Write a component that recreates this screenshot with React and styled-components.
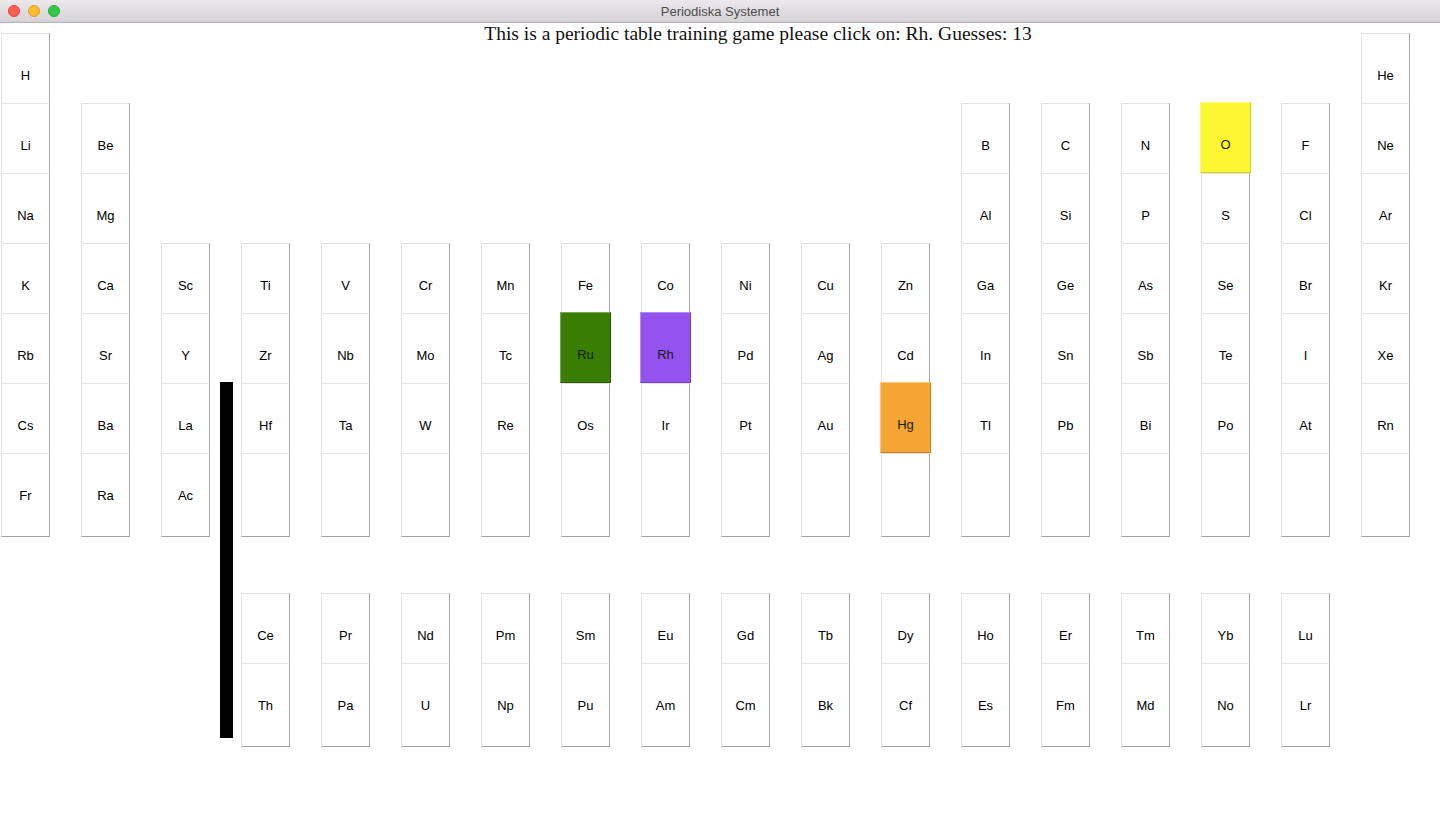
import React from 'react'
import styled, { createGlobalStyle, css } from 'styled-components';

const GlobalStyle = createGlobalStyle`
  body {
    margin: 0;
    background: #ffffff;
    font-family: "Liberation Sans", Arial, sans-serif;
  }
`;

const Page = styled.div`
  min-height: 829px;
`;

const TitleBar = styled.div`
  height: 22px;
  position: relative;
  display: flex;
  align-items: center;
  justify-content: center;
  background: linear-gradient(#ebe9eb, #d4d2d4);
  border-bottom: 1px solid #b3b1b3;
  font-size: 13px;
  color: #4c4c4c;
`;

const Lights = styled.div`
  position: absolute;
  left: 8px;
  top: 5px;
  display: flex;
  gap: 8px;
`;

const Light = styled.span`
  width: 12px;
  height: 12px;
  border-radius: 50%;
  box-sizing: border-box;
  background: ${p => p.$color};
  border: 1px solid ${p => p.$edge};
`;

const Board = styled.div`
  position: relative;
  padding: 10px 0 40px 1px;
`;

const Grid = styled.div`
  display: grid;
  grid-template-columns: repeat(18, 49px);
  grid-auto-rows: 70px;
  column-gap: 31px;
  margin-top: ${p => p.$gap || 0}px;
`;

const Heading = styled.h1`
  grid-row: 1;
  grid-column: 2 / 18;
  margin: -10px 0 0 0;
  padding-left: 105px;
  text-align: center;
  font-family: "Liberation Serif", "DejaVu Serif", serif;
  font-weight: normal;
  font-size: 19.5px;
  line-height: 22px;
  color: #111;
  white-space: nowrap;
  z-index: 2;
`;

const highlight = {
  yellow: ['#fdf632', '#fff97a', '#d6cf1a'],
  green: ['#3a7d04', '#74a84e', '#2a5a02'],
  purple: ['#9452ee', '#b48cf5', '#7a3fd0'],
  orange: ['#f4a533', '#fbc97c', '#c98422'],
};

const Cell = styled.button`
  grid-row: ${p => p.$row};
  grid-column: ${p => p.$col};
  height: 84px;
  width: 49px;
  box-sizing: border-box;
  padding: 0;
  margin: 0;
  background: #ffffff;
  border: 1px solid;
  border-color: #e2e2e2 #a3a3a3 #a3a3a3 #e2e2e2;
  font-family: "Liberation Sans", Arial, sans-serif;
  font-size: 13px;
  color: #000;
  cursor: pointer;
  ${p => p.$tone && css`
    background: ${highlight[p.$tone][0]};
    border-color: ${highlight[p.$tone][1]} ${highlight[p.$tone][2]} ${highlight[p.$tone][2]} ${highlight[p.$tone][1]};
    width: 51px;
    height: 71px;
    margin: -1px 0 0 -1px;
    align-self: start;
    padding-top: 14px;
    color: #1a1a1a;
    z-index: 1;
  `}
`;

const Divider = styled.div`
  position: absolute;
  left: 220px;
  top: 359px;
  width: 13px;
  height: 356px;
  background: #000;
`;

const main = [
  'H,,,,,,,,,,,,,,,,,He',
  'Li,Be,,,,,,,,,,,B,C,N,O,F,Ne',
  'Na,Mg,,,,,,,,,,,Al,Si,P,S,Cl,Ar',
  'K,Ca,Sc,Ti,V,Cr,Mn,Fe,Co,Ni,Cu,Zn,Ga,Ge,As,Se,Br,Kr',
  'Rb,Sr,Y,Zr,Nb,Mo,Tc,Ru,Rh,Pd,Ag,Cd,In,Sn,Sb,Te,I,Xe',
  'Cs,Ba,La,Hf,Ta,W,Re,Os,Ir,Pt,Au,Hg,Tl,Pb,Bi,Po,At,Rn',
  'Fr,Ra,Ac,_,_,_,_,_,_,_,_,_,_,_,_,_,_,_',
];

const inner = [
  ',,,Ce,Pr,Nd,Pm,Sm,Eu,Gd,Tb,Dy,Ho,Er,Tm,Yb,Lu,',
  ',,,Th,Pa,U,Np,Pu,Am,Cm,Bk,Cf,Es,Fm,Md,No,Lr,',
];

const tones = { O: 'yellow', Ru: 'green', Rh: 'purple', Hg: 'orange' };

function renderRows(rows) {
  const cells = [];
  rows.forEach((line, r) => {
    line.split(',').forEach((sym, c) => {
      if (!sym) return;
      const label = sym === '_' ? '' : sym;
      cells.push(
        <Cell key={r + '-' + c} $row={r + 1} $col={c + 1} $tone={tones[label]}>
          {label}
        </Cell>
      );
    });
  });
  return cells;
}

function App() {
  const target = 'Rh';
  const guesses = 13;

  return (
    <Page>
      <GlobalStyle />
      <TitleBar>
        <Lights>
          <Light $color="#fc5f57" $edge="#e0443e" />
          <Light $color="#fdbc2e" $edge="#dea123" />
          <Light $color="#34c84a" $edge="#27aa35" />
        </Lights>
        Periodiska Systemet
      </TitleBar>
      <Board>
        <Grid>
          <Heading>This is a periodic table training game please click on: {target}. Guesses: {guesses}</Heading>
          {renderRows(main)}
        </Grid>
        <Grid $gap={70}>
          {renderRows(inner)}
        </Grid>
        <Divider />
      </Board>
    </Page>
  );
}

export default App;
